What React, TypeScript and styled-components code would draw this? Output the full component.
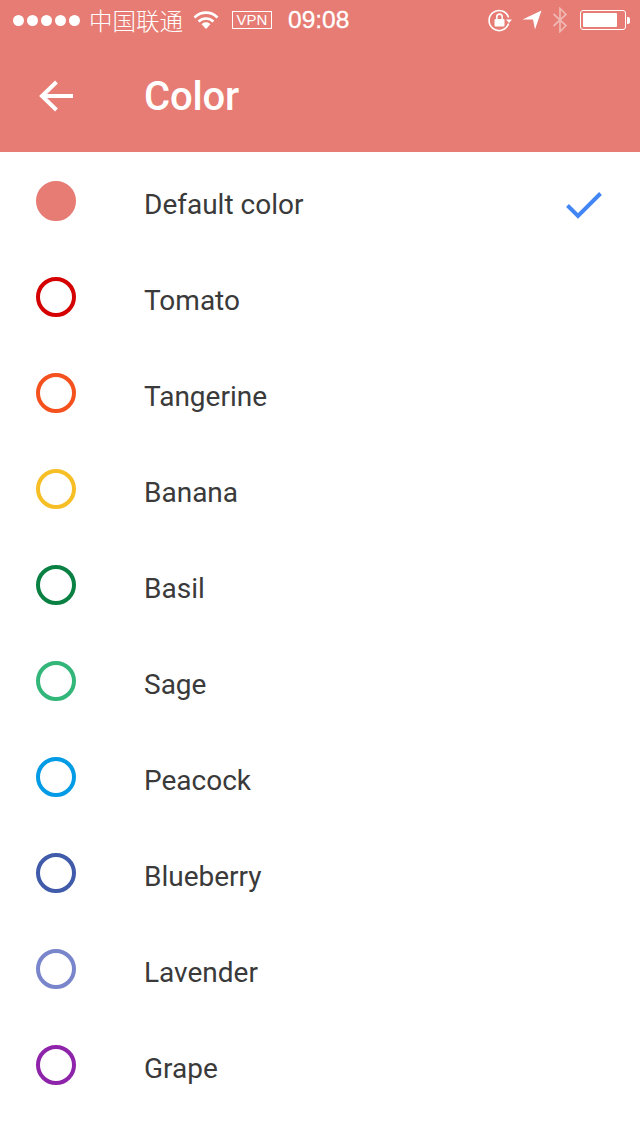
import React from "react";
import styled, { createGlobalStyle } from "styled-components";

const GlobalStyle = createGlobalStyle`
  html, body {
    margin: 0;
    padding: 0;
    background: #fff;
  }
  * {
    box-sizing: border-box;
  }
`;

const colors = [
  { name: "Default color", color: "#E67C73", filled: true },
  { name: "Tomato", color: "#D50000" },
  { name: "Tangerine", color: "#F4511E" },
  { name: "Banana", color: "#F6BF26" },
  { name: "Basil", color: "#0B8043" },
  { name: "Sage", color: "#33B679" },
  { name: "Peacock", color: "#039BE5" },
  { name: "Blueberry", color: "#3F5BA9" },
  { name: "Lavender", color: "#7986CB" },
  { name: "Grape", color: "#8E24AA" },
];

export default function App() {
  return (
    <>
      <GlobalStyle />
      <Page>
        <Header>
          <StatusBar>
            <StatusLeft>
              <Dots>
                {[0, 1, 2, 3, 4].map((i) => (
                  <Dot key={i} />
                ))}
              </Dots>
              <Carrier>中国联通</Carrier>
              <svg width="26" height="20" viewBox="0 0 26 20">
                <path d="M1.5 7.5C8 1 18 1 24.5 7.5" fill="none" stroke="#fff" strokeWidth="2.6" />
                <path d="M5.5 11.5C10 7.4 16 7.4 20.5 11.5" fill="none" stroke="#fff" strokeWidth="2.6" />
                <path d="M8.6 14.2C11.2 11.6 14.8 11.6 17.4 14.2L13 19Z" fill="#fff" />
              </svg>
              <Vpn>VPN</Vpn>
              <Clock>09:08</Clock>
            </StatusLeft>
            <StatusRight>
              <svg width="24" height="24" viewBox="0 0 24 24">
                <path d="M20.6 9.5A10 10 0 1 0 20.6 15.6" fill="none" stroke="#fff" strokeWidth="1.6" />
                <path d="M18 11.5H24L21 15Z" fill="#fff" />
                <rect x="6.5" y="11" width="10" height="7.5" rx="1" fill="#fff" />
                <path d="M8.8 11V8.8a2.7 2.7 0 0 1 5.4 0V11" fill="none" stroke="#fff" strokeWidth="1.6" />
              </svg>
              <LocationIcon width="20" height="20" viewBox="0 0 20 20">
                <path d="M0.5 9.5L19.5 0.5L13 19.5L11 9.5Z" fill="#fff" />
              </LocationIcon>
              <BluetoothIcon width="16" height="26" viewBox="0 0 16 26">
                <path d="M1.5 7L14 18.5L8 24.5V1.5L14 7.5L1.5 19" fill="none" stroke="#fff" strokeWidth="1.7" />
              </BluetoothIcon>
              <Battery>
                <BatteryShell>
                  <BatteryLevel />
                </BatteryShell>
                <BatteryTip />
              </Battery>
            </StatusRight>
          </StatusBar>
          <Toolbar>
            <BackButton>
              <svg width="36" height="32" viewBox="0 0 36 32">
                <path d="M34 16H3M17.5 2L3 16L17.5 30" fill="none" stroke="#fff" strokeWidth="4" />
              </svg>
            </BackButton>
            <Title>Color</Title>
          </Toolbar>
        </Header>
        <List>
          {colors.map((c) => (
            <Row key={c.name}>
              <Swatch $color={c.color} $filled={c.filled} />
              <Label>{c.name}</Label>
              {c.filled && (
                <svg width="36" height="30" viewBox="0 0 36 30">
                  <path d="M1.5 15.5L12 26L34.5 3.5" fill="none" stroke="#4285F4" strokeWidth="4" />
                </svg>
              )}
            </Row>
          ))}
        </List>
      </Page>
    </>
  );
}

const Page = styled.div`
  width: 640px;
  height: 1136px;
  overflow: hidden;
  background: #fff;
  font-family: Roboto, "Noto Sans CJK SC", sans-serif;
`;

const Header = styled.header`
  height: 152px;
  background: #e67c73;
  color: #fff;
`;

const StatusBar = styled.div`
  display: flex;
  align-items: center;
  justify-content: space-between;
  height: 40px;
  padding: 0 10px 0 13px;
`;

const StatusLeft = styled.div`
  display: flex;
  align-items: center;
`;

const Dots = styled.div`
  display: flex;
  gap: 3px;
  margin-right: 9px;
`;

const Dot = styled.span`
  width: 11px;
  height: 11px;
  border-radius: 50%;
  background: #fff;
`;

const Carrier = styled.span`
  font-family: "Noto Sans CJK SC", sans-serif;
  font-size: 23.5px;
  font-weight: 300;
  line-height: 40px;
  margin-right: 10px;
`;

const Vpn = styled.span`
  width: 40px;
  height: 18px;
  margin-left: 13px;
  margin-right: 16px;
  border: 1px solid #fff;
  font-family: "Liberation Sans", sans-serif;
  font-size: 15px;
  line-height: 16px;
  text-align: center;
`;

const Clock = styled.span`
  font-family: "Liberation Sans", sans-serif;
  font-size: 24.5px;
  line-height: 40px;
  -webkit-text-stroke: 0.3px #fff;
`;

const StatusRight = styled.div`
  display: flex;
  align-items: center;
`;

const LocationIcon = styled.svg`
  margin-left: 10px;
`;

const BluetoothIcon = styled.svg`
  margin-left: 10px;
  opacity: 0.45;
`;

const Battery = styled.div`
  display: flex;
  align-items: center;
  margin-left: 12px;
`;

const BatteryShell = styled.div`
  width: 46px;
  height: 20px;
  padding: 2px;
  border: 1px solid #fff;
  border-radius: 3px;
`;

const BatteryLevel = styled.div`
  width: 34px;
  height: 100%;
  background: #fff;
  border-radius: 1px;
`;

const BatteryTip = styled.div`
  width: 3px;
  height: 7px;
  margin-left: 1px;
  background: #fff;
  border-radius: 0 2px 2px 0;
`;

const Toolbar = styled.div`
  display: flex;
  align-items: center;
  height: 112px;
`;

const BackButton = styled.div`
  display: flex;
  width: 144px;
  padding: 0 0 0 39px;
`;

const Title = styled.h1`
  margin: 0;
  padding-top: 2px;
  font-size: 40px;
  font-weight: 500;
  letter-spacing: -0.2px;
  line-height: 110px;
`;

const List = styled.div`
  display: flex;
  flex-direction: column;
`;

const Row = styled.div`
  display: flex;
  align-items: center;
  height: 96px;
  padding: 10px 38px 0 36px;
`;

const Swatch = styled.span<{ $color: string; $filled?: boolean }>`
  flex: none;
  width: 40px;
  height: 40px;
  margin: -8px 68px 0 0;
  border-radius: 50%;
  border: 4px solid ${(p) => p.$color};
  background: ${(p) => (p.$filled ? p.$color : "transparent")};
`;

const Label = styled.span`
  flex: 1;
  font-size: 28px;
  line-height: 40px;
  color: #3a3a3a;
`;
